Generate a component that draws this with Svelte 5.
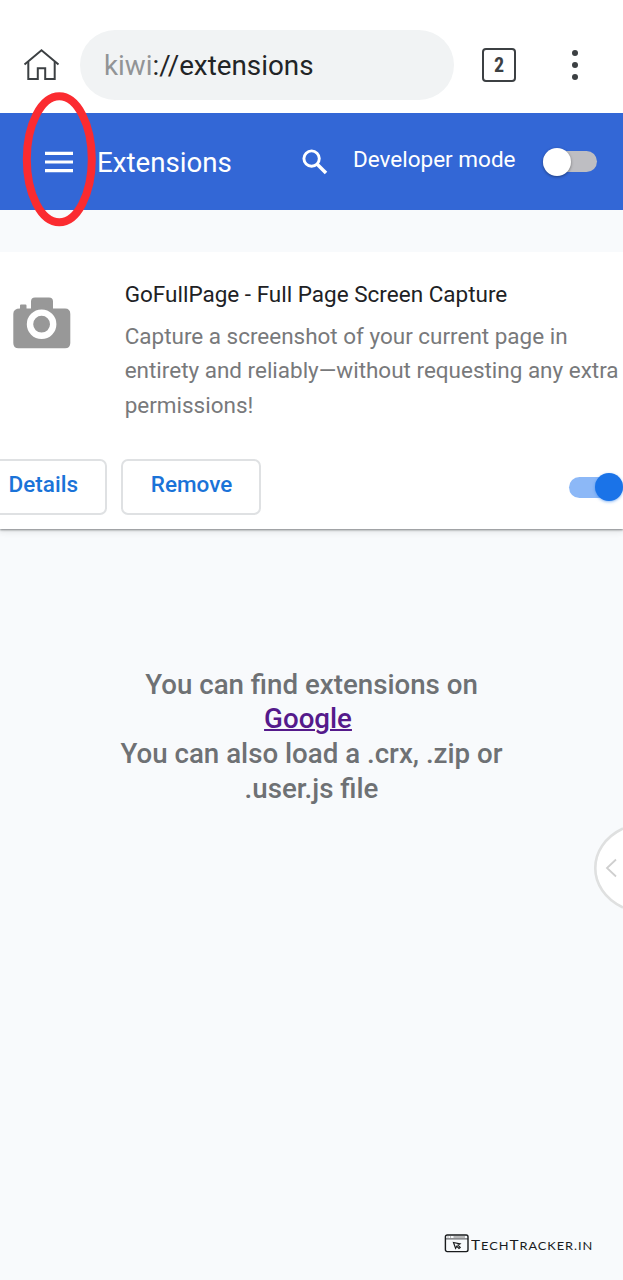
<script>
  const message = ['You can also load a .crx, .zip or', '.user.js file'];
</script>

<div class="page">
  <header class="browser">
    <svg class="home" width="38" height="34" viewBox="0 0 38 34" fill="none" stroke="#3c4043" stroke-width="2">
      <path d="M1.5 16.5 18.5 2.3 35.5 16.5" />
      <path d="M5.3 14V31H14.8V20.3H22.2V31H31.7V14" />
    </svg>
    <div class="address"><span class="scheme">kiwi</span>://extensions</div>
    <div class="tabs">2</div>
    <div class="menu"><i></i><i></i><i></i></div>
  </header>

  <div class="toolbar">
    <svg class="burger" width="28" height="22" viewBox="0 0 28 22" stroke="#fff" stroke-width="3.2">
      <path d="M0 2.3H28M0 11H28M0 19.7H28" />
    </svg>
    <h1>Extensions</h1>
    <svg class="search" width="26" height="26" viewBox="0 0 26 26" fill="none" stroke="#fff" stroke-width="2.9">
      <circle cx="9.6" cy="9.6" r="7.7" />
      <path d="M15.2 15.2 24 24" stroke-width="3.5" />
    </svg>
    <span class="dev">Developer mode</span>
    <div class="toggle off"><b></b></div>
    <svg class="ring" width="76" height="138" viewBox="0 0 76 138" fill="none" stroke="#fb2b30" stroke-width="8">
      <ellipse cx="38.3" cy="69.3" rx="32.5" ry="63" />
    </svg>
  </div>

  <section class="card">
    <div class="info">
      <svg class="camera" width="58" height="52" viewBox="0 0 58 52">
        <path fill="#989898" d="M7 11.5V8.5Q7 7.5 8 7.5H12.5Q13.5 7.5 13.5 8.5V11.5H18V4.5Q18 .5 22 .5H36Q40 .5 40 4.5V11.5H52Q57.3 11.5 57.3 17V46Q57.3 51.3 52 51.3H5.5Q.3 51.3 .3 46V17Q.3 11.5 7 11.5Z" />
        <circle cx="28.6" cy="27.2" r="11.6" fill="#989898" stroke="#fff" stroke-width="6.4" />
      </svg>
      <div class="copy">
        <h2>GoFullPage - Full Page Screen Capture</h2>
        <p>Capture a screenshot of your current page in<br />entirety and reliably—without requesting any extra<br />permissions!</p>
      </div>
    </div>
    <div class="actions">
      <button class="details">Details</button>
      <button class="remove">Remove</button>
      <div class="toggle on"><b></b></div>
    </div>
  </section>

  <div class="message">
    <div>You can find extensions on</div>
    <div class="link"><a href="#google">Google</a></div>
    {#each message as line}<div>{line}</div>{/each}
  </div>

  <svg class="handle" width="32" height="84" viewBox="0 0 32 84" fill="none">
    <path d="M32 2.5C-3 18-3 66 32 81.5Z" fill="#fff" />
    <path d="M32 2.5C-5 20-5 64 32 81.5" stroke="#dfe0e0" stroke-width="2.6" />
    <path d="M25 33.5 16 42 25 50.5" stroke="#cfcfcf" stroke-width="1.8" />
  </svg>

  <footer>
    <svg width="25" height="19" viewBox="0 0 25 19" fill="none" stroke="#191b1d" stroke-width="1.4">
      <rect x="1.4" y="1" width="22.6" height="16.6" rx="1.8" />
      <path d="M1.4 4.9H24" stroke-width=".8" />
      <path d="M3.5 3H4.5M6 3H7M9.5 3H21" stroke="#777" stroke-width="1.2" />
      <path d="M9.5 8.5 16 9.8 14 11.2 16.2 13.4 15 14.4 12.8 12.3 11.6 14.4Z" stroke-width="1.2" />
    </svg>
    <span class="brand">T<small>ECH</small>T<small>RACKER.IN</small></span>
  </footer>
</div>

<style>
  :global(body) { background: #f8fafc; }
  .page {
    position: relative;
    width: 623px;
    height: 1280px;
    overflow: hidden;
    display: flex;
    flex-direction: column;
    background: #f8fafc;
    font-family: Roboto, sans-serif;
  }
  .browser {
    box-sizing: border-box;
    height: 113px;
    flex: none;
    display: flex;
    align-items: center;
    padding: 17px 0 0 23px;
    background: #fff;
  }
  .home { flex: none; margin-top: -1px; }
  .address {
    box-sizing: border-box;
    width: 374px;
    height: 70px;
    margin-left: 19px;
    padding-left: 24px;
    border-radius: 35px;
    background: #f1f3f4;
    color: #222426;
    font-size: 27.8px;
    line-height: 71px;
    white-space: nowrap;
  }
  .scheme { color: #929496; }
  .tabs {
    box-sizing: border-box;
    width: 34px;
    height: 34px;
    margin-left: 28px;
    border: 2px solid #3c4043;
    border-radius: 4px;
    color: #3c4043;
    font: bold 20px/31px "Roboto Condensed", Roboto, sans-serif;
    text-align: center;
  }
  .menu { display: flex; flex-direction: column; gap: 5.6px; margin-left: 56px; }
  .menu i { width: 6px; height: 6px; border-radius: 50%; background: #3c4043; }
  .toolbar {
    position: relative;
    height: 97px;
    flex: none;
    display: flex;
    align-items: center;
    padding-left: 45px;
    background: #3367d6;
    color: #fff;
    white-space: nowrap;
  }
  .burger { flex: none; }
  h1 { width: 181px; margin: 3px 0 0 24px; font-size: 27.7px; font-weight: 400; line-height: 34px; }
  .search { flex: none; margin-left: 24px; }
  .dev { width: 163px; margin: -6px 0 0 25px; font-size: 22.5px; }
  .toggle { width: 54px; height: 21px; border-radius: 11px; flex: none; display: flex; align-items: center; }
  .toggle b { width: 28px; height: 28px; flex: none; border-radius: 50%; }
  .off { margin-left: 27px; background: #bebec2; }
  .off b { background: #fff; box-shadow: 0 1px 3px #0006; }
  .on { justify-content: flex-end; margin-left: auto; background: #8cb8f7; }
  .on b { background: #1a73e8; box-shadow: 0 1px 3px #1a73e880; }
  .ring { position: absolute; left: 21px; top: -23px; }
  .card {
    box-sizing: border-box;
    height: 277px;
    margin-top: 42px;
    flex: none;
    background: #fff;
    box-shadow: 0 1px 2px #3c404399, 0 2px 6px 1px #3c40431c;
    clip-path: inset(0 0 -12px);
  }
  .info { display: flex; height: 207px; padding-left: 13px; }
  .camera { margin-top: 45px; flex: none; }
  .copy { margin: 28px 0 0 53.7px; white-space: nowrap; }
  h2 { margin: 0; color: #202124; font-size: 22.5px; font-weight: 400; line-height: 28px; }
  p { margin: 10.6px 0 0; color: #78797b; font-size: 22.48px; line-height: 34.66px; }
  .actions { display: flex; align-items: center; height: 56px; }
  button {
    box-sizing: border-box;
    height: 56px;
    border: 2px solid #dfe1e3;
    border-radius: 7px;
    padding: 0 0 6px;
    background: #fff;
    color: #1a73d8;
    font: 500 22.5px/30px Roboto, sans-serif;
  }
  .details { width: 107px; padding-left: 8.6px; border-left: 0; border-radius: 0 7px 7px 0; text-align: left; }
  .remove { width: 140px; margin-left: 14px; padding-left: 1px; }
  .message {
    margin-top: 138.6px;
    color: #6e7174;
    font-size: 27.7px;
    font-weight: 500;
    line-height: 34.66px;
    text-align: center;
  }
  .link { padding-right: 7px; }
  a { color: #551a8b; text-decoration-thickness: 2px; }
  .handle { position: absolute; right: 0; top: 826px; }
  footer { position: absolute; left: 444px; top: 1234px; display: flex; align-items: flex-start; color: #191b1d; }
  .brand {
    margin: 2px 0 0 2px;
    font: 13px/19px Lato, sans-serif;
    letter-spacing: 0.8px;
    white-space: nowrap;
    transform: scaleX(1.185);
    transform-origin: left;
  }
  small { font-size: 10.8px; }
</style>
